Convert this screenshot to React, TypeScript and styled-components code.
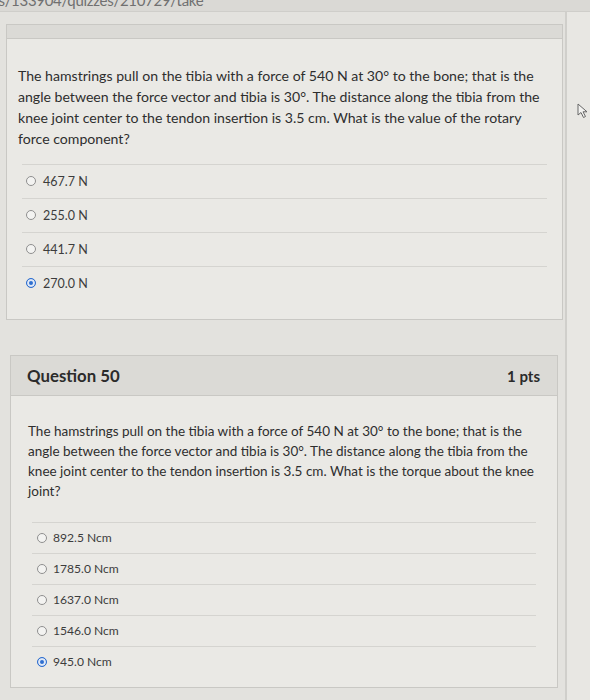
import React from "react";
import styled, { createGlobalStyle } from "styled-components";

const Global = createGlobalStyle`
  html, body { margin: 0; padding: 0; }
  body {
    background: #e3e2de;
    font-family: Lato, "Open Sans", "Liberation Sans", sans-serif;
    color: #2e2e2e;
    width: 590px;
    height: 700px;
    overflow: hidden;
  }
`;

const Page = styled.div`
  display: flex;
  flex-direction: column;
  width: 590px;
  height: 700px;
  overflow: hidden;
`;

const UrlStrip = styled.div`
  height: 11px;
  background: #dad9d5;
  border-bottom: 1px solid #cfceca;
  overflow: hidden;
  flex-shrink: 0;
`;

const UrlText = styled.div`
  margin-top: -9px;
  margin-left: -176px;
  font-size: 15px;
  letter-spacing: -0.3px;
  color: #707070;
  white-space: nowrap;
`;

const Main = styled.div`
  display: flex;
  flex: 1;
  min-height: 0;
`;

const Column = styled.div`
  width: 565px;
  padding-left: 6px;
  box-sizing: border-box;
  display: flex;
  flex-direction: column;
`;

const Gutter = styled.div`
  flex: 1;
  background: #e8e7e3;
  border-left: 2px solid #d0cfcb;
  position: relative;
`;

const Cursor = styled.svg`
  position: absolute;
  left: 10px;
  top: 91px;
`;

const Card = styled.div<{ $width: number; $top: number; $left: number }>`
  width: ${(p) => p.$width}px;
  margin-top: ${(p) => p.$top}px;
  margin-left: ${(p) => p.$left}px;
  background: #eae9e5;
  border: 1px solid #c9c8c4;
  box-sizing: border-box;
`;

const Header = styled.div<{ $h: number }>`
  height: ${(p) => p.$h}px;
  background: #dbdad6;
  border-bottom: 1px solid #c9c8c4;
  display: flex;
  align-items: center;
  justify-content: space-between;
  padding: 0 17px 0 16px;
`;

const Title = styled.div`
  font-size: 16.8px;
  font-weight: 700;
  color: #2b2b2b;
`;

const Points = styled.div`
  font-size: 15px;
  font-weight: 700;
  color: #2b2b2b;
`;

const Body = styled.div<{ $left: number; $right: number; $ptop: number; $pbottom: number }>`
  padding: ${(p) => p.$ptop}px ${(p) => p.$right}px ${(p) => p.$pbottom}px ${(p) => p.$left}px;
`;

const Text = styled.p<{ $size: number; $line: number }>`
  margin: 0;
  font-size: ${(p) => p.$size}px;
  line-height: ${(p) => p.$line}px;
  color: #2e2e2e;
`;

const Answers = styled.div<{ $top: number; $left: number; $right: number }>`
  margin: ${(p) => p.$top}px ${(p) => p.$right}px 0 ${(p) => p.$left}px;
  display: flex;
  flex-direction: column;
`;

const Answer = styled.label<{ $h: number; $size: number; $indent: number; $gap: number }>`
  display: flex;
  align-items: center;
  gap: ${(p) => p.$gap}px;
  height: ${(p) => p.$h}px;
  padding-bottom: 1px;
  box-sizing: border-box;
  border-top: 1px solid #d5d4d0;
  padding-left: ${(p) => p.$indent}px;
  font-size: ${(p) => p.$size}px;
  color: #3c3c3c;
`;

const Radio = styled.span<{ $on: boolean }>`
  width: 10px;
  height: 10px;
  border-radius: 50%;
  box-sizing: border-box;
  border: 1px solid ${(p) => (p.$on ? "#2f6fd0" : "#8f8f8f")};
  background: ${(p) => (p.$on ? "#2f6fd0" : "#f3f3f1")};
  box-shadow: ${(p) => (p.$on ? "inset 0 0 0 2px #dfe8f6" : "none")};
  flex-shrink: 0;
`;

const q1Text =
  "The hamstrings pull on the tibia with a force of 540 N at 30° to the bone; that is the angle between the force vector and tibia is 30°. The distance along the tibia from the knee joint center to the tendon insertion is 3.5 cm. What is the value of the rotary force component?";
const q2Text =
  "The hamstrings pull on the tibia with a force of 540 N at 30° to the bone; that is the angle between the force vector and tibia is 30°. The distance along the tibia from the knee joint center to the tendon insertion is 3.5 cm. What is the torque about the knee joint?";

const q1Answers = [
  { label: "467.7 N", on: false },
  { label: "255.0 N", on: false },
  { label: "441.7 N", on: false },
  { label: "270.0 N", on: true },
];
const q2Answers = [
  { label: "892.5 Ncm", on: false },
  { label: "1785.0 Ncm", on: false },
  { label: "1637.0 Ncm", on: false },
  { label: "1546.0 Ncm", on: false },
  { label: "945.0 Ncm", on: true },
];

export default function App() {
  return (
    <Page>
      <Global />
      <UrlStrip>
        <UrlText>lbcc.instructure.com/courses/133904/quizzes/210729/take</UrlText>
      </UrlStrip>
      <Main>
        <Column>
          <Card $width={557} $top={12} $left={0}>
            <Header $h={13} />
            <Body $left={11} $right={9} $ptop={26} $pbottom={19}>
              <Text $size={14.1} $line={21}>{q1Text}</Text>
              <Answers $top={15} $left={4} $right={6}>
                {q1Answers.map((a) => (
                  <Answer key={a.label} $h={34} $size={12.5} $indent={4} $gap={7}>
                    <Radio $on={a.on} />
                    {a.label}
                  </Answer>
                ))}
              </Answers>
            </Body>
          </Card>
          <Card $width={548} $top={35} $left={4}>
            <Header $h={39}>
              <Title>Question 50</Title>
              <Points>1 pts</Points>
            </Header>
            <Body $left={17} $right={12} $ptop={25} $pbottom={10}>
              <Text $size={13.5} $line={20}>{q2Text}</Text>
              <Answers $top={21} $left={4} $right={9}>
                {q2Answers.map((a) => (
                  <Answer key={a.label} $h={31} $size={12.1} $indent={5} $gap={6}>
                    <Radio $on={a.on} />
                    {a.label}
                  </Answer>
                ))}
              </Answers>
            </Body>
          </Card>
        </Column>
        <Gutter>
          <Cursor width="12" height="16" viewBox="0 0 12 16">
            <path
              d="M1 1 L1 12 L4 9.5 L6.5 14.5 L8.5 13.5 L6 8.8 L10 8.8 Z"
              fill="#f2f2f0"
              stroke="#666"
              strokeWidth="1"
              strokeLinejoin="round"
            />
          </Cursor>
        </Gutter>
      </Main>
    </Page>
  );
}
